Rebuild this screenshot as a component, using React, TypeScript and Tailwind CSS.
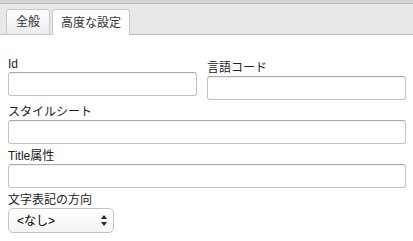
import React from 'react';

const font = { fontFamily: '"Liberation Sans", "Noto Sans CJK JP", sans-serif' };

const Field: React.FC<{ label: string; className?: string }> = ({ label, className }) => (
  <div className={className}>
    <label className="block h-4 text-[12px] leading-4 text-[#222]">{label}</label>
    <input
      type="text"
      className="block h-6 w-full rounded-[3px] border border-[#c2c2c2] border-t-[#a9a9a9] bg-white px-1 text-[12px] outline-none shadow-[inset_0_1px_1px_rgba(0,0,0,0.06)]"
    />
  </div>
);

const App: React.FC = () => {
  return (
    <div className="h-[241px] w-[413px] bg-white" style={font}>
      {/* Tabs */}
      <div className="h-[35px] border-t-[3px] border-t-[#d6d6d6] bg-[#d6d6d6]">
        <div className="flex h-[32px] items-end gap-[2px] border-t border-t-[#b9b9b9] border-b border-b-[#bdbdbd] bg-[#e8e8e8] pl-[6px]">
          <div className="-mb-px flex h-[26px] w-[44px] items-center justify-center rounded-t-[3px] border border-[#c9c9c9] bg-gradient-to-b from-white to-[#ececec] text-[12px] text-[#333]">
            全般
          </div>
          <div className="-mb-px flex h-[26px] w-[78px] items-center justify-center rounded-t-[3px] border border-b-0 border-[#c9c9c9] bg-white text-[12px] text-[#333]">
            高度な設定
          </div>
        </div>
      </div>

      {/* Form */}
      <div className="flex flex-col gap-1 px-2 pt-[21px]">
        <div className="grid grid-cols-[189px_199px] gap-x-[10px]">
          <Field label="Id" />
          <Field label="言語コード" className="pt-1" />
        </div>
        <Field label="スタイルシート" className="w-[398px]" />
        <Field label="Title属性" className="w-[398px]" />
        <div>
          <label className="block h-4 text-[12px] leading-4 text-[#222]">文字表記の方向</label>
          <div className="flex h-[25px] w-[106px] items-center justify-between rounded-[5px] border border-[#c4c4c4] bg-gradient-to-b from-white to-[#f4f4f4] pl-[8px] pr-[6px] text-[12px] text-black">
            <span>&lt;なし&gt;</span>
            <svg width="6" height="11" viewBox="0 0 6 11">
              <path d="M3 0 L6 4 L0 4 Z" fill="#222" />
              <path d="M0 7 L6 7 L3 11 Z" fill="#222" />
            </svg>
          </div>
        </div>
      </div>
    </div>
  );
};

export default App;
